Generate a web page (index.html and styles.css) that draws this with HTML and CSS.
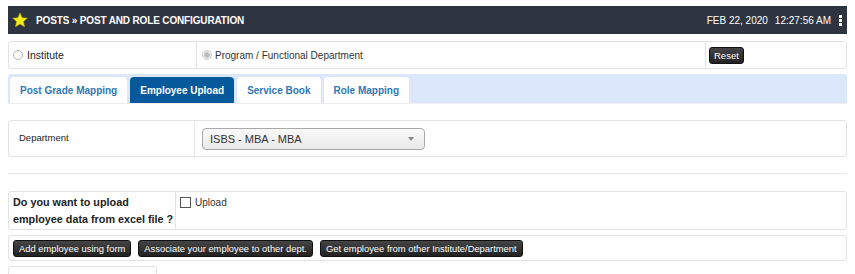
FILE: index.html
```html
<!DOCTYPE html>
<html lang="en">
<head>
    <meta charset="UTF-8">
    <title>Post and Role Configuration</title>
    <link rel="stylesheet" href="styles.css">
</head>
<body>
    <div class="page">
        <div class="titlebar">
            <div class="title">
                <svg class="star" width="16" height="16" viewBox="0 0 24 24"><path d="M12 1.5l3.2 7.1 7.6.7-5.8 5.1 1.8 7.6L12 18l-6.8 4 1.8-7.6-5.8-5.1 7.6-.7z" fill="#f5ec1c" stroke="#c9b800" stroke-width="0.8"/></svg>
                <span>POSTS &raquo; POST AND ROLE CONFIGURATION</span>
            </div>
            <div class="clock">
                <span>FEB 22, 2020</span>
                <span>12:27:56 AM</span>
                <span class="dots"><i></i><i></i><i></i></span>
            </div>
        </div>

        <div class="box type-row">
            <label class="cell cell-inst"><span class="radio"></span>Institute</label>
            <label class="cell cell-prog"><span class="radio checked"></span>Program / Functional Department</label>
            <div class="cell cell-reset"><button class="btn">Reset</button></div>
        </div>

        <div class="tabbar">
            <a class="tab">Post Grade Mapping</a>
            <a class="tab active">Employee Upload</a>
            <a class="tab">Service Book</a>
            <a class="tab">Role Mapping</a>
        </div>

        <div class="box dept-row">
            <div class="cell cell-label">Department</div>
            <div class="cell cell-select">
                <div class="select">ISBS - MBA - MBA<span class="caret"></span></div>
            </div>
        </div>

        <div class="rule"></div>

        <div class="box upload-row">
            <div class="cell cell-q">Do you want to upload<br>employee data from excel file ?</div>
            <label class="cell cell-check"><span class="check"></span>Upload</label>
        </div>

        <div class="box action-row">
            <button class="btn">Add employee using form</button>
            <button class="btn">Associate your employee to other dept.</button>
            <button class="btn">Get employee from other Institute/Department</button>
        </div>

        <div class="box stub"></div>
    </div>
</body>
</html>
```

FILE: styles.css
```css
* {
    margin: 0;
    padding: 0;
    box-sizing: border-box;
}

body {
    background: #ffffff;
    font-family: "Liberation Sans", Arial, sans-serif;
    font-size: 10px;
    color: #222;
}

.page {
    padding: 6px 8px 0 8px;
}

.titlebar {
    height: 28px;
    background: #2f3441;
    color: #fff;
    display: flex;
    align-items: center;
    justify-content: space-between;
    padding: 0 5px 0 4px;
}

.title {
    display: flex;
    align-items: center;
    gap: 8px;
    font-weight: bold;
    font-size: 10px;
    letter-spacing: -0.15px;
}

.clock {
    display: flex;
    align-items: center;
    gap: 7px;
    font-size: 10px;
}

.dots {
    display: flex;
    flex-direction: column;
    gap: 1px;
    margin-left: 1px;
}

.dots i {
    display: block;
    width: 3px;
    height: 3px;
    background: #fff;
}

.box {
    border: 1px solid #e3e3e3;
    border-radius: 3px;
    background: #fff;
}

.type-row {
    margin-top: 7px;
    height: 28px;
    display: flex;
}

.cell {
    display: flex;
    align-items: center;
}

.cell-inst {
    width: 188px;
    padding-left: 4px;
    gap: 4px;
    border-right: 1px solid #e3e3e3;
    font-size: 10.5px;
}

.cell-prog {
    width: 509px;
    padding-left: 5px;
    gap: 3px;
    border-right: 1px solid #e3e3e3;
    color: #333;
}

.cell-reset {
    padding-left: 3px;
}

.radio {
    width: 10px;
    height: 10px;
    border-radius: 50%;
    border: 1px solid #b5b5b5;
    background: #fafafa;
    display: inline-block;
}

.radio.checked {
    background: radial-gradient(circle, #bdbdbd 0 2.5px, #ececec 3px);
    border-color: #cfcfcf;
}

.btn {
    font-family: inherit;
    font-size: 9.4px;
    color: #fff;
    background: linear-gradient(#444, #222);
    border: 1px solid #111;
    border-radius: 3px;
    height: 17px;
    padding: 0 5px;
    cursor: pointer;
}

.cell-reset .btn {
    font-size: 9.5px;
    padding: 0 4px;
}

.tabbar {
    margin-top: 5px;
    height: 30px;
    background: #dbe8fc;
    border-radius: 3px 3px 0 0;
    display: flex;
    align-items: flex-end;
    gap: 3px;
    padding-left: 2px;
    border-bottom: 1px solid #eeeeee;
}

.tab {
    height: 26px;
    background: #fff;
    border-radius: 4px 4px 0 0;
    display: flex;
    align-items: center;
    padding: 0 10px;
    font-weight: bold;
    font-size: 10px;
    color: #2e78b8;
}

.tab.active {
    background: #06599a;
    color: #fff;
}

.dept-row {
    margin-top: 16px;
    height: 37px;
    display: flex;
}

.cell-label {
    width: 186px;
    padding-left: 10px;
    align-items: flex-start;
    padding-top: 11px;
    border-right: 1px solid #e8e8e8;
    font-size: 9.5px;
}

.cell-select {
    padding-left: 7px;
}

.select {
    width: 223px;
    height: 22px;
    border: 1px solid #a9a9a9;
    border-radius: 4px;
    background: linear-gradient(#fafafa, #e9e9e9);
    display: flex;
    align-items: center;
    justify-content: space-between;
    padding: 0 10px 0 7px;
    font-size: 11px;
    color: #333;
}

.caret {
    width: 0;
    height: 0;
    border-left: 3px solid transparent;
    border-right: 3px solid transparent;
    border-top: 4px solid #888;
}

.rule {
    margin-top: 16px;
    height: 1px;
    background: #eaeaea;
}

.upload-row {
    margin-top: 17px;
    height: 39px;
    display: flex;
}

.cell-q {
    width: 167px;
    padding-left: 4px;
    font-weight: bold;
    font-size: 10.8px;
    line-height: 17px;
    border-right: 1px solid #e3e3e3;
    white-space: nowrap;
}

.cell-check {
    align-items: flex-start;
    padding-top: 5px;
    padding-left: 4px;
    gap: 4px;
    color: #333;
}

.check {
    width: 11px;
    height: 11px;
    border: 1px solid #555;
    background: #fff;
    display: inline-block;
}

.action-row {
    margin-top: 5px;
    height: 26px;
    display: flex;
    align-items: center;
    gap: 7px;
    padding-left: 4px;
}

.stub {
    margin-top: 5px;
    width: 149px;
    height: 20px;
}
```
